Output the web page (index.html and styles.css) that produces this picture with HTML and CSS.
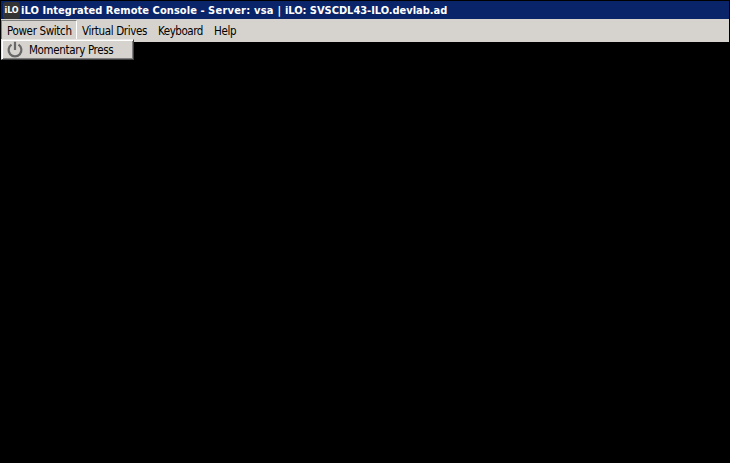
FILE: index.html
```html
<!DOCTYPE html>
<html lang="en">
<head>
<meta charset="utf-8">
<title>iLO Integrated Remote Console</title>
<link rel="stylesheet" href="styles.css">
</head>
<body>
<div class="window">
  <header class="titlebar">
    <span class="app-icon">iLO</span>
    <span class="title"><span class="product">iLO Integrated Remote Console - </span><span class="server">Server: vsa | </span><span class="host">iLO: SVSCDL43-ILO.devlab.ad</span></span>
  </header>
  <nav class="menubar">
    <div class="menu open">
      <span class="label">Power Switch</span>
      <div class="dropdown">
        <svg class="power-icon" width="18" height="18" viewBox="0 0 18 18"><path d="M5.5 3.7A6.4 6.4 0 1 0 12.5 3.7M9 .8V9" fill="none" stroke="#686868" stroke-width="2.2"/></svg>
        <span class="label">Momentary Press</span>
      </div>
    </div>
    <div class="menu drives"><span class="label">Virtual Drives</span></div>
    <div class="menu keyboard"><span class="label">Keyboard</span></div>
    <div class="menu"><span class="label">Help</span></div>
  </nav>
  <main class="screen"></main>
</div>
</body>
</html>
```
FILE: styles.css
```css
* { box-sizing: border-box; }
body { margin: 0; background: #000; overflow: hidden; }
.window { height: 463px; padding: 1px 1px 0; display: flex; flex-direction: column; background: #000; }
.titlebar {
  height: 18px; flex: none; display: flex; align-items: center; padding-left: 2px; gap: 1px;
  background: #0a246a; color: #fff; white-space: nowrap;
}
.app-icon {
  width: 17px; height: 17px; border-radius: 3px; background: #333; text-align: center;
  font: bold 8px/17px "DejaVu Sans", sans-serif; letter-spacing: -0.2px;
}
.title { font: bold 11px/17px "DejaVu Sans Condensed", "DejaVu Sans", sans-serif; white-space: pre; }
.product { letter-spacing: 0.06px; }
.server { letter-spacing: 0.22px; }
.host { letter-spacing: -0.03px; }
.menubar {
  height: 23px; flex: none; display: flex; align-items: flex-start; background: #d6d3ce; color: #000;
  font: 11.5px/18px "DejaVu Sans Condensed", "DejaVu Sans", sans-serif; letter-spacing: -0.34px; white-space: nowrap;
}
.menu { position: relative; height: 20px; margin-top: 1px; padding: 1px 5px 0; border: 1px solid transparent; }
.menu.open { width: 76px; margin-right: -1px; border-color: #808080 #fff #fff #808080; }
.menu.drives { width: 76px; letter-spacing: -0.36px; }
.menu.keyboard { width: 56px; letter-spacing: -0.46px; }
.dropdown {
  position: absolute; left: -1px; top: 18px; width: 133px; height: 21px;
  display: flex; align-items: center; padding-left: 4px; gap: 5px; background: #d6d3ce;
  border: 1px solid; border-color: #e8e6e2 #404040 #404040 #e8e6e2;
  box-shadow: inset 1px 1px #fff, inset -1px -1px #808080;
}
.power-icon { flex: none; }
.screen { flex: 1; background: #000; }
```
